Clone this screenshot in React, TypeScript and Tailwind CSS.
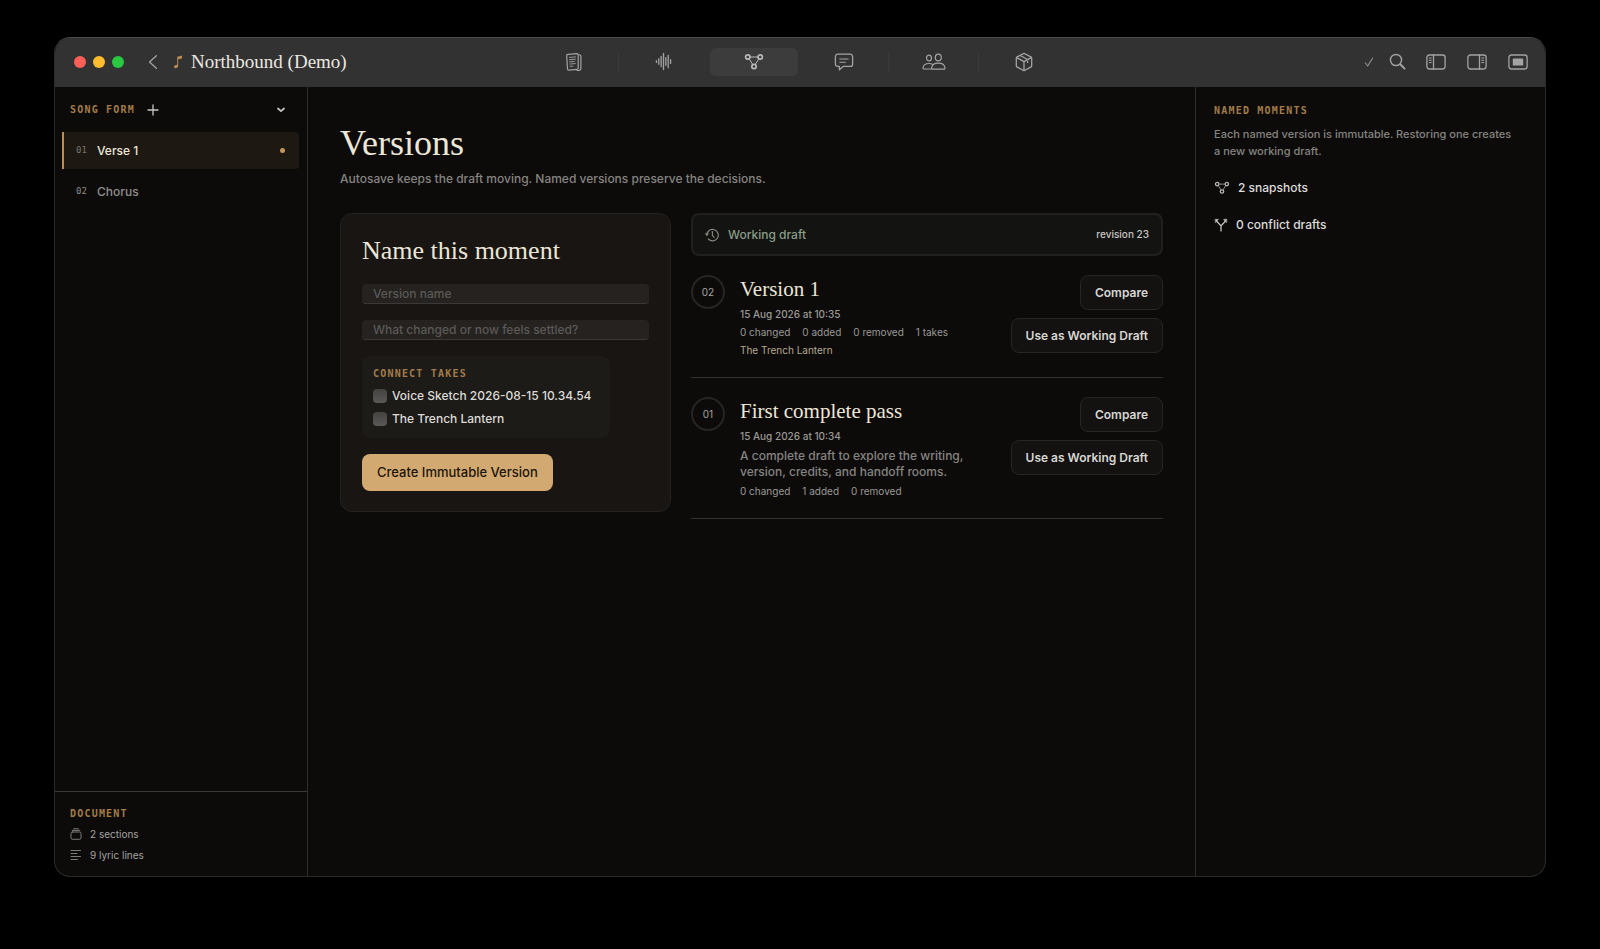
import React from "react";

type IconProps = { className?: string };

const stroke = {
  fill: "none",
  stroke: "currentColor",
  strokeLinecap: "round" as const,
  strokeLinejoin: "round" as const,
};

function PagesIcon({ className }: IconProps) {
  return (
    <svg viewBox="0 0 18 20" className={className} strokeWidth="1.2" {...stroke}>
      <path d="M3 2.4 12 1.6q1.2 0 1.2 1.2v13.4q0 1-1.1 1.1l-8.3.8q-1.2.1-1.3-1.1L1.700 3.800Q1.700 2.500 3 2.400Z" />
      <path d="M14.600 2.800q1.300.2 1.300 1.500v12.300q0 1.500-1.500 1.700l-2.400.2" />
      <path d="M4.500 5.400l6-.5M4.600 7.600l5.900-.4M4.700 9.800l4.600-.3M4.900 12l5.500-.4M5.200 14.300l2.600-.2" strokeWidth="0.900" />
    </svg>
  );
}

function WaveIcon({ className }: IconProps) {
  return (
    <svg viewBox="0 0 18 20" className={className} strokeWidth="1.400" {...stroke}>
      <path d="M1.500 9v2M4 7v6M6.500 4.500v11M9 1.500v17M11.500 6v8M14 3.500v13M16.500 8v4" />
    </svg>
  );
}

function NodesIcon({ className }: IconProps) {
  return (
    <svg viewBox="0 0 20 18" className={className} strokeWidth="1.700" {...stroke}>
      <circle cx="3.800" cy="4" r="2.200" />
      <circle cx="16.200" cy="4" r="2.200" />
      <circle cx="10" cy="13.500" r="2.200" />
      <path d="M6.200 4h7.600M5.200 6l3.500 5.400M14.800 6l-3.500 5.400" strokeWidth="1" />
    </svg>
  );
}

function CommentIcon({ className }: IconProps) {
  return (
    <svg viewBox="0 0 20 18" className={className} strokeWidth="1.300" {...stroke}>
      <path d="M3.600 1.200h12.800a2.200 2.200 0 0 1 2.200 2.200v7.800a2.200 2.200 0 0 1-2.200 2.200H9.200L5.400 16.800v-3.400H3.600a2.200 2.200 0 0 1-2.200-2.200V3.400a2.200 2.200 0 0 1 2.200-2.200Z" />
      <path d="M5.800 6h8.400M5.800 9.200h5.700" strokeWidth="1.100" />
    </svg>
  );
}

function PeopleIcon({ className }: IconProps) {
  return (
    <svg viewBox="0 0 24 18" className={className} strokeWidth="1.200" {...stroke}>
      <ellipse cx="7" cy="5" rx="2.500" ry="2.900" />
      <ellipse cx="16.300" cy="4.500" rx="3" ry="3.400" />
      <path d="M9.400 16H2.200q-1.300 0-1.200-1.300C1.300 12.300 3.800 10.500 7 10.500q1.900 0 3.400.8" />
      <path d="M10.800 16.200h11q1.400 0 1.200-1.400c-.4-2.700-3.200-4.600-6.700-4.600s-6.300 1.900-6.700 4.600q-.2 1.400 1.200 1.400Z" />
    </svg>
  );
}

function BoxIcon({ className }: IconProps) {
  return (
    <svg viewBox="0 0 18 20" className={className} strokeWidth="1.300" {...stroke}>
      <path d="M8.200 1.700q.8-.4 1.600 0l6 3.200q.9.500.9 1.500v7.200q0 1-.9 1.500l-6 3.200q-.8.400-1.600 0l-6-3.200q-.9-.5-.9-1.500V6.400q0-1 .9-1.500Z" />
      <path d="M1.700 5.600 9 9.600l7.300-4M9 9.600v8.800M5.200 3.500l7.400 4v3" />
    </svg>
  );
}

function SidebarIcon({ className, side }: IconProps & { side: "left" | "right" }) {
  const right = side === "right";
  return (
    <svg viewBox="0 0 20 16" className={className} strokeWidth="1.300" {...stroke}>
      <rect x="0.900" y="1" width="18.200" height="14" rx="2.400" />
      <path d={right ? "M12.500 1v14" : "M7.500 1v14"} />
      <path
        d={right ? "M14.700 4h2M14.700 6.300h2M14.700 8.600h2" : "M3.300 4h2M3.300 6.300h2M3.300 8.600h2"}
        strokeWidth="1"
      />
    </svg>
  );
}

function FocusIcon({ className }: IconProps) {
  return (
    <svg viewBox="0 0 20 16" className={className} strokeWidth="1.300" {...stroke}>
      <rect x="0.900" y="1" width="18.200" height="14" rx="2.400" />
      <rect x="4.800" y="4.400" width="10.400" height="7.200" rx="0.600" fill="currentColor" stroke="none" />
    </svg>
  );
}

function SearchIcon({ className }: IconProps) {
  return (
    <svg viewBox="0 0 18 18" className={className} {...stroke}>
      <circle cx="7.400" cy="7.400" r="5.900" strokeWidth="1.500" />
      <path d="m11.900 11.900 4.600 4.600" strokeWidth="2" />
    </svg>
  );
}

function CheckIcon({ className }: IconProps) {
  return (
    <svg viewBox="0 0 10 10" className={className} strokeWidth="1.200" {...stroke}>
      <path d="M1.400 6 3.700 9 8.500 1.200" />
    </svg>
  );
}

function BackIcon({ className }: IconProps) {
  return (
    <svg viewBox="0 0 10 16" className={className} strokeWidth="1.300" {...stroke}>
      <path d="M8.400 1.800 1.500 8l6.900 6.200" />
    </svg>
  );
}

function NoteIcon({ className }: IconProps) {
  return (
    <svg viewBox="0 0 10 14" className={className}>
      <path
        d="M4.200 1.700 9 .6v2.800L5.200 4.300v6.500c0 1.500-1.200 2.500-2.600 2.500-1 0-1.600-.6-1.600-1.500 0-1.100.9-1.700 2-1.900.8-.1 1.200-.3 1.200-1Z"
        fill="currentColor"
      />
    </svg>
  );
}

function PlusIcon({ className }: IconProps) {
  return (
    <svg viewBox="0 0 12 12" className={className} strokeWidth="1.300" {...stroke}>
      <path d="M6 1v10M1 6h10" />
    </svg>
  );
}

function ChevronIcon({ className }: IconProps) {
  return (
    <svg viewBox="0 0 8 6" className={className} strokeWidth="1.700" {...stroke}>
      <path d="m1 1.500 3 2.600 3-2.600" />
    </svg>
  );
}

function HistoryIcon({ className }: IconProps) {
  return (
    <svg viewBox="0 0 14 14" className={className} strokeWidth="1.200" {...stroke}>
      <path d="M1.900 6.600A5.700 5.700 0 1 1 3.400 11" />
      <path d="M.4 5.700 1.900 8l1.600-2.300Z" fill="currentColor" strokeWidth="0.500" />
      <path d="M7.400 3.600v3.800l1.700 2" />
    </svg>
  );
}

function BranchIcon({ className }: IconProps) {
  return (
    <svg viewBox="0 0 12 13" className={className} strokeWidth="1.200" {...stroke}>
      <path d="M6 12V7.300L2 3M6 7.300 10 3" />
      <path d="M.7 1.200h3L1 4.200ZM11.300 1.200h-3L11 4.200Z" fill="currentColor" strokeWidth="0.400" />
    </svg>
  );
}

function StackIcon({ className }: IconProps) {
  return (
    <svg viewBox="0 0 12 12" className={className} strokeWidth="1" {...stroke}>
      <rect x="1" y="4" width="10" height="7.300" rx="1.400" />
      <path d="M2.200 2.400h7.600M3.600.8h4.800" />
    </svg>
  );
}

function LinesIcon({ className }: IconProps) {
  return (
    <svg viewBox="0 0 12 12" className={className} strokeWidth="1" {...stroke}>
      <path d="M1 1.500h9.500M1 4.500h6M1 7.500h9.500M1 10.500h6.500" />
    </svg>
  );
}

function Label({ children }: { children: React.ReactNode }) {
  return (
    <h2 className="font-['DejaVu_Sans_Mono',monospace] text-[10px] leading-3 font-bold tracking-[0.12em] text-[#a37c4a] uppercase">
      {children}
    </h2>
  );
}

const tabs = [
  { name: "Lyrics", icon: <PagesIcon className="h-5 w-[18px]" />, divider: true },
  { name: "Takes", icon: <WaveIcon className="h-[19px] w-[17px]" />, divider: false },
  { name: "Versions", icon: <NodesIcon className="h-[18px] w-5" />, divider: false, active: true },
  { name: "Comments", icon: <CommentIcon className="h-[18px] w-5" />, divider: true },
  { name: "Credits", icon: <PeopleIcon className="h-[18px] w-6" />, divider: true },
  { name: "Handoff", icon: <BoxIcon className="h-5 w-[18px]" />, divider: false },
];

function TitleBar() {
  return (
    <header className="grid h-[49px] grid-cols-[1fr_auto_1fr] items-center bg-[#323232] pb-[2px] text-[#a3a3a3]">
      <div className="flex items-center pl-[19px]">
        <div className="flex gap-[7px]">
          <button aria-label="Close" className="size-3 rounded-full bg-[#fe5f57]" />
          <button aria-label="Minimize" className="size-3 rounded-full bg-[#febc2e]" />
          <button aria-label="Zoom" className="size-3 rounded-full bg-[#28c840]" />
        </div>
        <button aria-label="Back" className="ml-6">
          <BackIcon className="h-4 w-[10px]" />
        </button>
        <NoteIcon className="ml-[15px] h-[14px] w-[10px] text-[#b98a54]" />
        <h1 className="ml-2 font-['Liberation_Serif',serif] text-[19px] leading-6 whitespace-nowrap text-[#ebe7e0]">
          Northbound (Demo)
        </h1>
      </div>
      <nav className="mr-[3px] flex">
        {tabs.map((tab) => (
          <div key={tab.name} className="relative flex w-[90px] justify-center">
            <button
              aria-label={tab.name}
              aria-current={tab.active ? "page" : undefined}
              className={
                tab.active
                  ? "flex h-7 w-[88px] items-center justify-center rounded-md bg-[#3c3c3c] text-[#b8b8b8]"
                  : "flex h-7 w-[88px] items-center justify-center"
              }
            >
              {tab.icon}
            </button>
            {tab.divider && <span className="absolute top-1 right-0 h-5 w-px bg-[#3a3a3a]" />}
          </div>
        ))}
      </nav>
      <div className="flex items-center justify-end pr-[17px]">
        <CheckIcon className="mr-[15px] size-[10px] text-[#8c8c8c]" />
        <button aria-label="Search" className="mr-5">
          <SearchIcon className="size-[17px]" />
        </button>
        <div className="flex gap-[21px]">
          <button aria-label="Toggle sidebar">
            <SidebarIcon side="left" className="h-4 w-5" />
          </button>
          <button aria-label="Toggle inspector">
            <SidebarIcon side="right" className="h-4 w-5" />
          </button>
          <button aria-label="Focus mode">
            <FocusIcon className="h-4 w-5" />
          </button>
        </div>
      </div>
    </header>
  );
}

function SongForm() {
  return (
    <aside className="flex w-[253px] shrink-0 flex-col border-r border-[#2e2d2b]">
      <div className="flex items-center pt-[17px] pr-[22px] pl-[15px]">
        <Label>Song form</Label>
        <button aria-label="Add section" className="ml-3 text-[#c9c7c4]">
          <PlusIcon className="size-3" />
        </button>
        <button aria-label="Collapse" className="ml-auto text-[#c9c7c4]">
          <ChevronIcon className="h-[6px] w-2" />
        </button>
      </div>
      <nav className="flex flex-col gap-1 pt-4 pr-2 pl-[7px]">
        <button className="flex h-[37px] items-center rounded-r-sm border-l-2 border-[#b98e57] bg-[#1d1812] pr-[14px] pl-3">
          <span className="w-[21px] text-left font-['DejaVu_Sans_Mono',monospace] text-[9px] text-[#78736c]">
            01
          </span>
          <span className="text-xs font-medium text-[#ece6da]">Verse 1</span>
          <span className="ml-auto size-[5px] rounded-full bg-[#c1955b]" />
        </button>
        <button className="flex h-[37px] items-center border-l-2 border-transparent pr-[14px] pl-3">
          <span className="w-[21px] text-left font-['DejaVu_Sans_Mono',monospace] text-[9px] text-[#8f8c89]">
            02
          </span>
          <span className="text-xs font-medium text-[#918f8d]">Chorus</span>
        </button>
      </nav>
      <footer className="mt-auto border-t border-[#3b3a38] px-[15px] pt-4 pb-[15px] text-[10px] leading-3 text-[#a5a3a0]">
        <Label>Document</Label>
        <p className="mt-2 flex items-center gap-2">
          <StackIcon className="size-3 text-[#7d7b78]" />2 sections
        </p>
        <p className="mt-[9px] flex items-center gap-2">
          <LinesIcon className="size-3 text-[#7d7b78]" />9 lyric lines
        </p>
      </footer>
    </aside>
  );
}

const field =
  "h-5 w-full rounded-[4px] border-b border-[#3b3937] bg-[#252220] px-[11px] text-xs font-medium text-[#e0dcd5] outline-none placeholder:text-[#5c5956]";

const takes = ["Voice Sketch 2026-08-15 10.34.54", "The Trench Lantern"];

function NameCard() {
  return (
    <form className="flex w-[331px] shrink-0 flex-col items-start gap-4 rounded-xl border border-[#24221f] bg-[#181512] px-[21px] py-5">
      <h2 className="font-['Liberation_Serif',serif] text-[26px] leading-[34px] text-[#ece6d8]">
        Name this moment
      </h2>
      <input aria-label="Version name" placeholder="Version name" className={field} />
      <input
        aria-label="What changed or now feels settled?"
        placeholder="What changed or now feels settled?"
        className={field}
      />
      <fieldset className="min-w-[248px] rounded-lg bg-[#1c1b18] px-[11px] pt-3 pb-[11px]">
        <Label>Connect takes</Label>
        <div className="mt-2 flex flex-col gap-[7px]">
          {takes.map((take) => (
            <label
              key={take}
              className="flex h-4 items-center gap-[5px] text-xs font-medium whitespace-nowrap text-[#dcdad7]"
            >
              <input
                type="checkbox"
                className="size-[14px] appearance-none rounded-[4px] bg-linear-to-b from-[#434240] to-[#5a5957] checked:bg-[#d2a971]"
              />
              {take}
            </label>
          ))}
        </div>
      </fieldset>
      <button
        type="button"
        className="h-[37px] rounded-lg bg-[#d2a971] px-[15px] text-[13px] font-medium text-[#1d150b]"
      >
        Create Immutable Version
      </button>
    </form>
  );
}

type Version = {
  number: string;
  title: string;
  date: string;
  note?: string;
  stats: string[];
  take?: string;
};

const versions: Version[] = [
  {
    number: "02",
    title: "Version 1",
    date: "15 Aug 2026 at 10:35",
    stats: ["0 changed", "0 added", "0 removed", "1 takes"],
    take: "The Trench Lantern",
  },
  {
    number: "01",
    title: "First complete pass",
    date: "15 Aug 2026 at 10:34",
    note: "A complete draft to explore the writing, version, credits, and handoff rooms.",
    stats: ["0 changed", "1 added", "0 removed"],
  },
];

const outlineButton =
  "h-[35px] rounded-lg border border-[#272624] bg-[#131210] px-[14px] text-xs font-semibold whitespace-nowrap text-[#d8d6d3]";

function VersionItem({ version }: { version: Version }) {
  return (
    <li className="mt-[19px] flex items-start border-b border-[#32312f] pb-5">
      <span className="flex size-[34px] shrink-0 items-center justify-center rounded-full border-2 border-[#262523] text-[10px] text-[#a5a3a0]">
        {version.number}
      </span>
      <div className="ml-[15px] flex w-[244px] flex-col gap-[5px] text-[10px] leading-[13px] text-[#9b9996]">
        <h3 className="font-['Liberation_Serif',serif] text-[21px] leading-7 text-[#ece6d8]">
          {version.title}
        </h3>
        <p className="font-medium">{version.date}</p>
        {version.note && (
          <p className="text-xs leading-4 font-medium text-[#868481]">{version.note}</p>
        )}
        <p className="flex gap-3">
          {version.stats.map((stat) => (
            <span key={stat}>{stat}</span>
          ))}
        </p>
        {version.take && <p className="text-[#b5a892]">{version.take}</p>}
      </div>
      <div className="ml-auto flex flex-col items-end gap-2">
        <button className={outlineButton}>Compare</button>
        <button className={outlineButton}>Use as Working Draft</button>
      </div>
    </li>
  );
}

function Versions() {
  return (
    <main className="min-w-0 flex-1 border-r border-[#2e2d2b] px-8 pt-9">
      <h1 className="font-['Liberation_Serif',serif] text-[36px] leading-10 text-[#ece6d8]">
        Versions
      </h1>
      <p className="mt-2 text-xs leading-4 font-medium text-[#868481]">
        Autosave keeps the draft moving. Named versions preserve the decisions.
      </p>
      <div className="mt-[26px] flex items-start gap-5">
        <NameCard />
        <section className="min-w-0 flex-1">
          <div className="flex h-[43px] items-center rounded-lg border-2 border-[#20211f] bg-[#131411] px-3">
            <HistoryIcon className="size-[14px] text-[#81857d]" />
            <span className="ml-[9px] text-xs font-medium text-[#8a9c87]">Working draft</span>
            <span className="ml-auto text-[10px] font-medium text-[#c9c7c4]">revision 23</span>
          </div>
          <ul>
            {versions.map((version) => (
              <VersionItem key={version.number} version={version} />
            ))}
          </ul>
        </section>
      </div>
    </main>
  );
}

function Inspector() {
  return (
    <aside className="w-[349px] shrink-0 px-[18px] pt-[18px] text-xs leading-4 font-medium text-[#dedcd9]">
      <Label>Named moments</Label>
      <p className="mt-[9px] pr-2 text-[11px] leading-[17px] text-[#868481]">
        Each named version is immutable. Restoring one creates a new working draft.
      </p>
      <p className="mt-5 flex items-center gap-2">
        <NodesIcon className="h-[14px] w-4 text-[#b5b3b0]" />2 snapshots
      </p>
      <p className="mt-[21px] flex items-center gap-2">
        <BranchIcon className="h-[14px] w-[14px] text-[#c9c7c4]" />0 conflict drafts
      </p>
    </aside>
  );
}

export default function App() {
  return (
    <div className="flex min-h-screen flex-col bg-black px-[54px] pt-[37px] pb-[72px] font-['Inter',sans-serif]">
      <div className="flex flex-1 flex-col overflow-hidden rounded-2xl border border-[#2a2a29] border-t-[#4a4a4a] bg-[#0c0b09]">
        <TitleBar />
        <div className="flex flex-1">
          <SongForm />
          <Versions />
          <Inspector />
        </div>
      </div>
    </div>
  );
}
